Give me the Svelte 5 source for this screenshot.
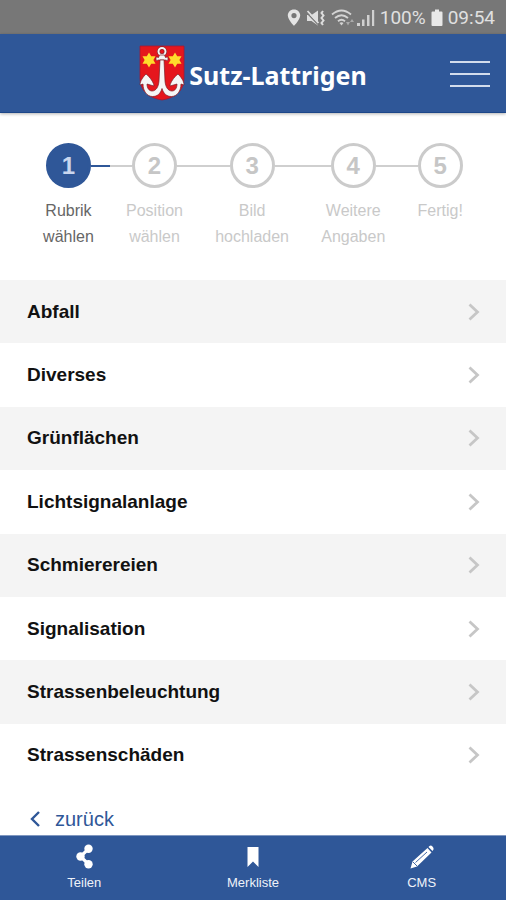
<script>
  const steps = [
    ['Rubrik', 'wählen'],
    ['Position', 'wählen'],
    ['Bild', 'hochladen'],
    ['Weitere', 'Angaben'],
    ['Fertig!']
  ];
  const categories = [
    'Abfall',
    'Diverses',
    'Grünflächen',
    'Lichtsignalanlage',
    'Schmierereien',
    'Signalisation',
    'Strassenbeleuchtung',
    'Strassenschäden'
  ];
  const current = 0;
</script>

<div class="page">
  <div class="status">
    <svg width="14" height="18" viewBox="0 0 14 18" aria-hidden="true">
      <path fill="#e4e4e4" fill-rule="evenodd" d="M7 0.500C3.300 0.500 0.800 3.200 0.800 6.600 0.800 10.700 7 17 7 17s6.200-6.300 6.200-10.400C13.200 3.200 10.700 0.500 7 0.500zM7 4a2.600 2.600 0 1 1 0 5.200A2.600 2.600 0 0 1 7 4z" />
    </svg>
    <svg class="mute" width="20" height="18" viewBox="0 0 20 18" aria-hidden="true">
      <path fill="#dedede" d="M1 6h4.500L12 1.500v15L5.500 12H1z" />
      <path fill="none" stroke="#777" stroke-width="1.200" d="M1 4l11 11.500" />
      <path fill="none" stroke="#dedede" stroke-width="1.800" d="M1.500 2l11 12" />
      <path fill="none" stroke="#dedede" stroke-width="2" d="M17 2l-1.500 2 2 2.500-2 2.500 2 2.500-2 2.500 1.500 2" />
    </svg>
    <svg class="wifi" width="24" height="18" viewBox="0 0 24 18" aria-hidden="true">
      <g fill="none" stroke="#d4d4d4" stroke-width="1.800">
        <path d="M1 5.500q9.500-8 19 0" />
        <path d="M4 9q6.500-5.500 13 0" />
        <path d="M7 12.300q3.500-3 7 0" />
      </g>
      <path fill="#d4d4d4" d="M8.500 14q2-1.500 4 0l-2 2.500z" />
      <path fill="#aaa" d="M15 13h4l-2 3.500zM19 13l2-3 2 3z" />
    </svg>
    <svg width="18" height="18" viewBox="0 0 18 18" aria-hidden="true">
      <path fill="#d0d0d0" d="M0 14h3v3H0zM5 10.500h2.500V17H5zM10 6h2.500v11H10zM15 1h2.200v16H15z" />
    </svg>
    <span>100%</span>
    <svg width="12" height="18" viewBox="0 0 12 18" aria-hidden="true">
      <path fill="#e8e8e8" d="M4 0.500h4V2.500h2.500q1 0 1 1V16q0 1-1 1h-9q-1 0-1-1V3.500q0-1 1-1H4z" />
    </svg>
    <time>09:54</time>
  </div>

  <header>
    <a class="brand" href="#start">
      <svg width="46" height="56" viewBox="0 0 46 56" aria-hidden="true">
        <path fill="#e5161d" stroke="#a11a35" stroke-width="0.800" d="M1 1h44v32c0 13-9 20-22 22C10 53 1 46 1 33z" />
        <g fill="#ffdc2b">
          <path d="M10 7.500l2.200 3.800h4.300l-2.100 3.700 2.100 3.700h-4.300L10 22.500l-2.200-3.800H3.500L5.600 15l-2.100-3.700h4.300z" />
          <path d="M36 7.500l2.200 3.800h4.300l-2.100 3.700 2.100 3.700h-4.300L36 22.500l-2.200-3.800h-4.300l2.100-3.700-2.100-3.700h4.300z" />
        </g>
        <circle cx="23" cy="6.500" r="3.500" fill="none" stroke="#7a1d27" stroke-width="3.200" />
        <circle cx="23" cy="6.500" r="3.500" fill="none" stroke="#f5f5f5" stroke-width="2" />
        <g fill="#f6f6f6" stroke="#7a1d27" stroke-width="0.700" stroke-linejoin="round">
          <path d="M20.500 10h5l1 2.500q2-1 2.500 0v2.500q-.5 1-2.500 0h-7q-2 1-2.500 0v-2.500q.5-1 2.500 0z" />
          <path d="M21 15h4l1 21c.500 6 3 10 7 10 3 0 5-3 5-7l-7 2c0-3 4-9 8-12 3 3 6 7 6 11l-3-1c0 7-4 12.500-9.500 12.500-5 0-8-3-9.500-8-1.500 5-4.500 8-9.500 8C8 51.500 4 46 4 39l-3 1c0-4 3-8 6-11 4 3 8 9 8 12l-7-2c0 4 2 7 5 7 4 0 6.500-4 7-10z" />
        </g>
      </svg>
      <span>Sutz-Lattrigen</span>
    </a>
    <button class="menu" type="button" aria-label="Menü">
      <i></i><i></i><i></i>
    </button>
  </header>

  <main>
    <ol class="steps">
      {#each steps as lines, i}
        <li class:active={i === current} aria-current={i === current ? 'step' : undefined}>
          <div class="marker"><i></i><b>{i + 1}</b><i></i></div>
          <div class="label">
            {#each lines as line}<span>{line}</span>{/each}
          </div>
        </li>
      {/each}
    </ol>

    <ul class="list">
      {#each categories as name}
        <li>
          <a href="#rubrik">
            <span>{name}</span>
            <svg width="12" height="18" viewBox="0 0 12 18" aria-hidden="true">
              <path fill="none" stroke="#c6c6c6" stroke-width="2.800" d="M1.500 1.500L9.500 9l-8 7.500" />
            </svg>
          </a>
        </li>
      {/each}
    </ul>

    <a class="back" href="#zurueck">
      <svg width="12" height="16" viewBox="0 0 12 16" aria-hidden="true">
        <path fill="none" stroke="#2f5798" stroke-width="2.400" d="M10 1L3 8l7 7" />
      </svg>
      <span>zurück</span>
    </a>
  </main>

  <nav>
    <a href="#teilen">
      <svg width="24" height="26" viewBox="0 0 24 26" aria-hidden="true">
        <g fill="#fff"><circle cx="8.500" cy="12.500" r="4.200" /><circle cx="16.500" cy="4.800" r="4.200" /><circle cx="16.500" cy="20.200" r="4.200" /></g>
        <path fill="none" stroke="#fff" stroke-width="3.200" d="M16.500 4.800l-8 7.700 8 7.700" />
      </svg>
      <span>Teilen</span>
    </a>
    <a href="#merkliste">
      <svg width="24" height="26" viewBox="0 0 24 26" aria-hidden="true">
        <path fill="#fff" d="M6.500 3h11v20L12 17.500 6.500 23z" />
      </svg>
      <span>Merkliste</span>
    </a>
    <a href="#cms">
      <svg width="24" height="26" viewBox="0 0 24 26" aria-hidden="true">
        <path fill="#fff" d="M0.500 24.500l2-7L17.500 4l4 4.500L7 22.500zM18.500 3l1-1q1.500-1 3 0.500t1 3l-1 1.500z" />
        <path fill="none" stroke="#2f5798" stroke-width="0.900" d="M5.500 18.500L17 8M3 18l4 4" />
      </svg>
      <span>CMS</span>
    </a>
  </nav>
</div>

<style>
  :global(body) {
    margin: 0;
  }
  .page {
    display: flex;
    flex-direction: column;
    min-height: 100vh;
    background: #fff;
    font-family: 'Liberation Sans', Arial, sans-serif;
  }
  a {
    color: inherit;
    text-decoration: none;
  }
  svg {
    display: block;
    flex: none;
  }
  ol,
  ul {
    margin: 0;
    padding: 0;
    list-style: none;
  }
  .status {
    display: flex;
    align-items: center;
    justify-content: flex-end;
    gap: 5px;
    padding: 2px 11px 0;
    background: #777;
    color: #e0e0e0;
    font: 19px/32px Roboto, sans-serif;
  }
  .wifi {
    margin-right: -3px;
  }
  header {
    display: grid;
    grid-template-columns: 1fr auto 1fr;
    align-items: center;
    padding: 11px 16px;
    border-bottom: 1px solid #1d4789;
    box-shadow: 0 1px 3px rgba(0, 0, 0, 0.3);
    background: #2f5798;
  }
  .brand {
    grid-column: 2;
    display: flex;
    align-items: center;
    gap: 4px;
    color: #fff;
    font: bold 25px/36px 'Noto Sans', sans-serif;
  }
  .brand span {
    padding-top: 4px;
  }
  .menu {
    justify-self: end;
    display: flex;
    flex-direction: column;
    gap: 10px;
    width: 40px;
    padding: 2px 0 0;
    border: 0;
    background: none;
  }
  .menu i {
    height: 2px;
    background: #d3dcec;
  }
  main {
    flex: 1;
    display: flex;
    flex-direction: column;
  }
  .steps {
    display: flex;
    padding: 30px 27px;
  }
  .steps li {
    flex: 1 1 auto;
    color: #c9c9c9;
  }
  .marker {
    display: flex;
    align-items: center;
  }
  .marker i {
    flex: 1;
    height: 2px;
    background: #cfcfcf;
  }
  .marker b {
    box-sizing: border-box;
    width: 45px;
    height: 45px;
    border: 3px solid #cbcbcb;
    border-radius: 50%;
    color: #c6c6c6;
    font-size: 24px;
    line-height: 40px;
    text-align: center;
  }
  .active .marker i {
    background: #2f5798;
  }
  .steps .active .marker b {
    border-color: #2f5798;
    background: #2f5798;
    color: #c9d6ee;
  }
  .steps li:first-child i:first-child,
  .steps li:last-child i:last-child {
    background: none;
  }
  .label {
    padding-top: 10px;
    font-size: 16px;
    line-height: 26px;
    text-align: center;
  }
  .label span {
    display: block;
  }
  .active .label {
    color: #666;
  }
  .list {
    flex: 1;
    display: flex;
    flex-direction: column;
  }
  .list li {
    flex: 1;
    display: flex;
    min-height: 56px;
  }
  .list li:nth-child(odd) {
    background: #f4f4f4;
  }
  .list a {
    flex: 1;
    display: flex;
    align-items: center;
    justify-content: space-between;
    padding: 0 26px 0 27px;
    color: #111;
    font-size: 19px;
    font-weight: bold;
    line-height: 24px;
  }
  .back {
    display: flex;
    align-items: center;
    gap: 14px;
    padding: 20px 29px 4px;
    color: #2f5798;
    font-size: 20px;
    line-height: 24px;
  }
  nav {
    display: flex;
    border-top: 1px solid #7f97c0;
    background: #2f5798;
    color: #eef2f9;
  }
  nav a {
    flex: 1;
    display: flex;
    flex-direction: column;
    align-items: center;
    gap: 4px;
    padding: 8px 0;
    font-size: 13px;
    line-height: 18px;
  }
</style>
